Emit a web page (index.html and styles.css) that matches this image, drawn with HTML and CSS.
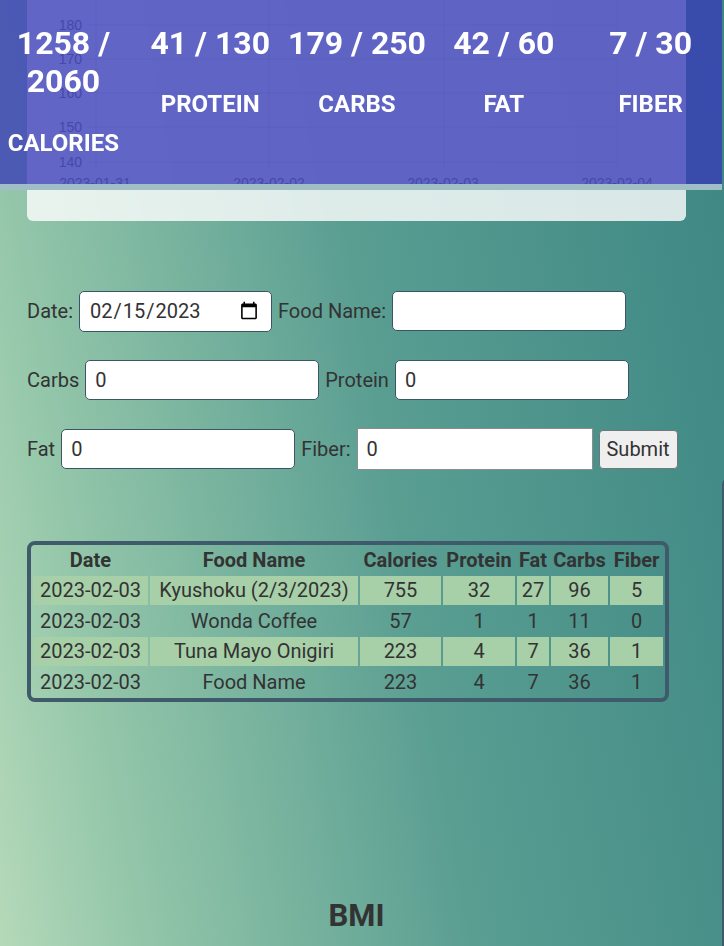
FILE: index.html
```html
<!DOCTYPE html>
<html lang="en">
<head>
<meta charset="utf-8">
<title>Food Tracker</title>
<link rel="stylesheet" href="styles.css">
</head>
<body>
<header class="stats">
  <div class="stats-grid">
    <div class="stat"><div class="stat-value">1258 / 2060</div><div class="stat-label">CALORIES</div></div>
    <div class="stat"><div class="stat-value">41 / 130</div><div class="stat-label">PROTEIN</div></div>
    <div class="stat"><div class="stat-value">179 / 250</div><div class="stat-label">CARBS</div></div>
    <div class="stat"><div class="stat-value">42 / 60</div><div class="stat-label">FAT</div></div>
    <div class="stat"><div class="stat-value">7 / 30</div><div class="stat-label">FIBER</div></div>
  </div>
</header>
<div class="layout">
  <main class="main">
    <section class="chart-card">
      <svg class="chart" width="659" height="221" viewBox="0 0 659 221">
        <g class="grid">
          <line x1="60" y1="25" x2="590" y2="25"/>
          <line x1="60" y1="59" x2="590" y2="59"/>
          <line x1="60" y1="93" x2="590" y2="93"/>
          <line x1="60" y1="127" x2="590" y2="127"/>
          <line x1="60" y1="162" x2="590" y2="162"/>
          <line x1="69" y1="0" x2="69" y2="170"/>
          <line x1="242" y1="0" x2="242" y2="170"/>
          <line x1="417" y1="0" x2="417" y2="170"/>
          <line x1="590" y1="0" x2="590" y2="170"/>
        </g>
        <g class="ticks">
          <text x="55" y="30" text-anchor="end">180</text>
          <text x="55" y="64" text-anchor="end">170</text>
          <text x="55" y="98" text-anchor="end">160</text>
          <text x="55" y="132" text-anchor="end">150</text>
          <text x="55" y="167" text-anchor="end">140</text>
          <text x="68" y="188" text-anchor="middle">2023-01-31</text>
          <text x="242" y="188" text-anchor="middle">2023-02-02</text>
          <text x="416" y="188" text-anchor="middle">2023-02-03</text>
          <text x="590" y="188" text-anchor="middle">2023-02-04</text>
        </g>
      </svg>
    </section>

    <form class="entry-form">
      <div class="form-row">
        <label class="form-label">Date:</label>
        <input class="field field-date" type="date" value="2023-02-15">
        <label class="form-label">Food Name:</label>
        <input class="field" type="text">
      </div>
      <div class="form-row">
        <label class="form-label">Carbs</label>
        <input class="field" type="text" value="0">
        <label class="form-label">Protein</label>
        <input class="field" type="text" value="0">
      </div>
      <div class="form-row">
        <label class="form-label">Fat</label>
        <input class="field" type="text" value="0">
        <label class="form-label">Fiber:</label>
        <input class="field field-plain" type="text" value="0">
        <button class="submit" type="button">Submit</button>
      </div>
    </form>

    <table class="food-table">
      <colgroup>
        <col class="c-date"><col class="c-name"><col class="c-cal"><col class="c-pro"><col class="c-fat"><col class="c-carb"><col class="c-fib">
      </colgroup>
      <thead>
        <tr><th>Date</th><th>Food Name</th><th>Calories</th><th>Protein</th><th>Fat</th><th>Carbs</th><th>Fiber</th></tr>
      </thead>
      <tbody>
        <tr class="shaded"><td>2023-02-03</td><td>Kyushoku (2/3/2023)</td><td>755</td><td>32</td><td>27</td><td>96</td><td>5</td></tr>
        <tr><td>2023-02-03</td><td>Wonda Coffee</td><td>57</td><td>1</td><td>1</td><td>11</td><td>0</td></tr>
        <tr class="shaded"><td>2023-02-03</td><td>Tuna Mayo Onigiri</td><td>223</td><td>4</td><td>7</td><td>36</td><td>1</td></tr>
        <tr><td>2023-02-03</td><td>Food Name</td><td>223</td><td>4</td><td>7</td><td>36</td><td>1</td></tr>
      </tbody>
    </table>

    <h2 class="bmi-title">BMI</h2>
  </main>
  <aside class="side-card"></aside>
</div>
</body>
</html>
```

FILE: styles.css
```css
html, body {
  margin: 0;
  padding: 0;
  overflow: hidden;
  height: 100%;
}

body {
  font-family: Roboto, "Noto Sans", sans-serif;
  color: #333;
  background: linear-gradient(80deg, #b4d9b9 0%, #95c7aa 15%, #5a9e92 53%, #408985 94%, #3e8784 100%) fixed;
}

/* ---------- header ---------- */
.stats {
  position: fixed;
  top: 0;
  left: 0;
  width: 722px;
  height: 184px;
  background: rgba(55, 57, 184, 0.76);
  border-bottom: 6px solid #a0bec6;
  overflow: hidden;
  z-index: 10;
}

.stats-grid {
  display: grid;
  grid-template-columns: repeat(5, 1fr);
  width: 734px;
  margin-left: -10px;
  padding-top: 24px;
}

.stat {
  text-align: center;
  color: #fff;
  font-weight: 700;
}

.stat-value {
  font-size: 32px;
  line-height: 38.4px;
}

.stat-label {
  font-size: 24px;
  line-height: 28.8px;
  margin-top: 28px;
}

/* ---------- layout ---------- */
.layout {
  display: flex;
  align-items: flex-start;
}

.main {
  flex: none;
  width: 722px;
  box-sizing: border-box;
  padding: 0 36px 0 27px;
}

.side-card {
  flex: none;
  width: 300px;
  height: 700px;
  margin-top: 477px;
  border: 2px solid #3e5a6b;
  border-radius: 8px;
}

/* ---------- chart card ---------- */
.chart-card {
  width: 659px;
  height: 221px;
  background: rgba(255, 255, 255, 0.8);
  border-radius: 0 0 6px 6px;
}

.chart {
  display: block;
}

.chart .grid line {
  stroke: rgba(0, 0, 0, 0.08);
  stroke-width: 1;
}

.chart .ticks text {
  font-family: "Liberation Sans", Arial, sans-serif;
  font-size: 14px;
  fill: #777;
}

/* ---------- form ---------- */
.entry-form {
  margin-top: 70px;
  display: flex;
  flex-direction: column;
  gap: 29px;
}

.form-row {
  display: flex;
  align-items: center;
  gap: 6px;
  height: 40px;
}

.form-label {
  font-size: 20px;
  color: #333;
}

.field {
  box-sizing: border-box;
  width: 234px;
  height: 40px;
  border: 1px solid #3b5566;
  border-radius: 5px;
  background: #fff;
  padding: 0 9px;
  font-family: Roboto, "Noto Sans", sans-serif;
  font-size: 20px;
  color: #333;
  outline: none;
}

.field-date {
  width: 193px;
  height: 41px;
  padding-right: 10px;
}

.field-plain {
  width: 236px;
  height: 42px;
  border: 1px solid #8d8d8d;
  border-radius: 0;
}

.submit {
  box-sizing: border-box;
  width: 79px;
  height: 39px;
  padding: 0;
  border: 1px solid #6f7777;
  border-radius: 4px;
  background: #efefef;
  font-family: Roboto, "Noto Sans", sans-serif;
  font-size: 20px;
  color: #333;
}

/* ---------- table ---------- */
.food-table {
  margin-top: 72px;
  width: 642px;
  table-layout: fixed;
  border-collapse: separate;
  border-spacing: 2px;
  border: 4px solid #3e5a6b;
  border-radius: 8px;
  font-size: 20px;
  color: #333;
}

.c-date { width: 115px; }
.c-name { width: 208px; }
.c-cal { width: 81px; }
.c-pro { width: 72px; }
.c-fat { width: 32px; }
.c-carb { width: 57px; }
.c-fib { width: 53px; }

.food-table th {
  font-weight: 700;
  line-height: 25px;
  padding: 1px 0;
  text-align: center;
  white-space: nowrap;
}

.food-table td {
  line-height: 26.5px;
  padding: 1px 0;
  text-align: center;
  white-space: nowrap;
}

.food-table tr.shaded td {
  background: #a7cfa8;
}

/* ---------- BMI ---------- */
.bmi-title {
  width: 659px;
  margin: 195px 0 0;
  text-align: center;
  font-size: 31px;
  line-height: 37.2px;
  font-weight: 700;
  color: #333;
}
```
